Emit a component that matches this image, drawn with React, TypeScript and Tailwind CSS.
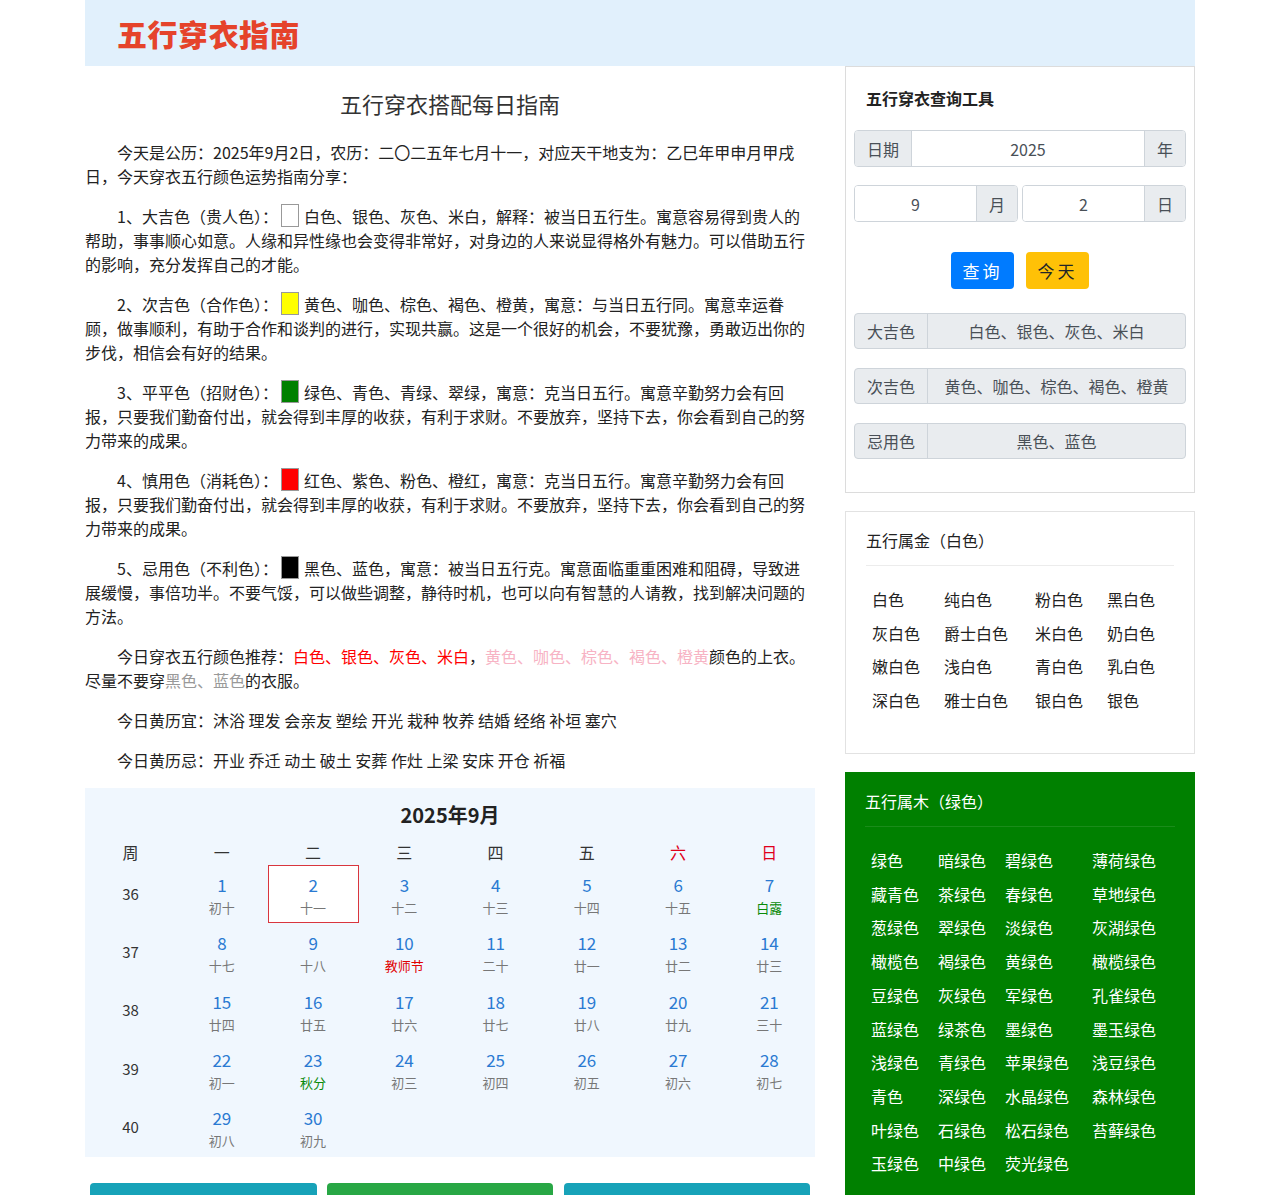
const weeks: { no: number; days: { d: number; l: string; t?: 'fest' | 'term' }[] }[] = [
  {
    no: 36,
    days: [
      { d: 1, l: '初十' },
      { d: 2, l: '十一' },
      { d: 3, l: '十二' },
      { d: 4, l: '十三' },
      { d: 5, l: '十四' },
      { d: 6, l: '十五' },
      { d: 7, l: '白露', t: 'term' },
    ],
  },
  {
    no: 37,
    days: [
      { d: 8, l: '十七' },
      { d: 9, l: '十八' },
      { d: 10, l: '教师节', t: 'fest' },
      { d: 11, l: '二十' },
      { d: 12, l: '廿一' },
      { d: 13, l: '廿二' },
      { d: 14, l: '廿三' },
    ],
  },
  {
    no: 38,
    days: [
      { d: 15, l: '廿四' },
      { d: 16, l: '廿五' },
      { d: 17, l: '廿六' },
      { d: 18, l: '廿七' },
      { d: 19, l: '廿八' },
      { d: 20, l: '廿九' },
      { d: 21, l: '三十' },
    ],
  },
  {
    no: 39,
    days: [
      { d: 22, l: '初一' },
      { d: 23, l: '秋分', t: 'term' },
      { d: 24, l: '初三' },
      { d: 25, l: '初四' },
      { d: 26, l: '初五' },
      { d: 27, l: '初六' },
      { d: 28, l: '初七' },
    ],
  },
  {
    no: 40,
    days: [
      { d: 29, l: '初八' },
      { d: 30, l: '初九' },
    ],
  },
]

const whiteColors = [
  '白色', '纯白色', '粉白色', '黑白色',
  '灰白色', '爵士白色', '米白色', '奶白色',
  '嫩白色', '浅白色', '青白色', '乳白色',
  '深白色', '雅士白色', '银白色', '银色',
]

const greenColors = [
  '绿色', '暗绿色', '碧绿色', '薄荷绿色',
  '藏青色', '茶绿色', '春绿色', '草地绿色',
  '葱绿色', '翠绿色', '淡绿色', '灰湖绿色',
  '橄榄色', '褐绿色', '黄绿色', '橄榄绿色',
  '豆绿色', '灰绿色', '军绿色', '孔雀绿色',
  '蓝绿色', '绿茶色', '墨绿色', '墨玉绿色',
  '浅绿色', '青绿色', '苹果绿色', '浅豆绿色',
  '青色', '深绿色', '水晶绿色', '森林绿色',
  '叶绿色', '石绿色', '松石绿色', '苔藓绿色',
  '玉绿色', '中绿色', '荧光绿色',
]

function Swatch({ color }: { color: string }) {
  return (
    <span
      className="ml-[3px] mr-[5px] inline-block h-[23px] w-[18px] border border-[#999] align-top"
      style={{ backgroundColor: color }}
    />
  )
}

function P({ children }: { children: React.ReactNode }) {
  return <p className="mb-[16px] indent-[32px] text-[16px] leading-[24px] text-[#222]">{children}</p>
}

function Calendar() {
  const heads = ['周', '一', '二', '三', '四', '五', '六', '日']
  return (
    <div className="bg-[#f0f7fe] pb-[1px] pt-[12px]">
      <h3 className="mb-[4px] text-center text-[20px] font-bold leading-[30px] text-[#222]">2025年9月</h3>
      <div className="grid h-[31px] grid-cols-8 pt-[6px] text-center text-[16px] leading-[24px]">
        {heads.map((h, i) => (
          <div key={h} className={i >= 6 ? 'text-[#e0001b]' : 'text-[#333]'}>
            {h}
          </div>
        ))}
      </div>
      {weeks.map((w) => (
        <div key={w.no} className="grid h-[58.25px] grid-cols-8 text-center">
          <div className="flex items-center justify-center text-[15px] text-[#333]">{w.no}</div>
          {w.days.map((day) => (
            <div
              key={day.d}
              className={
                day.d === 2
                  ? 'border border-[#d9363e] bg-white pt-[7px]'
                  : 'border border-transparent pt-[7px]'
              }
            >
              <div className="text-[17px] leading-[24px] text-[#2a7ad2]">{day.d}</div>
              <div
                className={
                  'text-[13px] leading-[22px] ' +
                  (day.t === 'fest' ? 'text-[#e00000]' : day.t === 'term' ? 'text-[#0a8a0a]' : 'text-[#777]')
                }
              >
                {day.l}
              </div>
            </div>
          ))}
        </div>
      ))}
    </div>
  )
}

function InputGroup({ label, value, unit, labelW }: { label?: string; value: string; unit: string; labelW?: string }) {
  return (
    <div className="flex h-[37px] flex-1 overflow-hidden rounded-[4px] border border-[#ced4da] text-[16px] text-[#495057]">
      {label && (
        <span className={'flex items-center justify-center border-r border-[#ced4da] bg-[#e9ecef] ' + (labelW ?? '')}>
          {label}
        </span>
      )}
      <span className="flex flex-1 items-center justify-center bg-white">{value}</span>
      <span className="flex w-[41px] items-center justify-center border-l border-[#ced4da] bg-[#e9ecef]">{unit}</span>
    </div>
  )
}

function ResultRow({ label, value }: { label: string; value: string }) {
  return (
    <div className="flex h-[36px] overflow-hidden rounded-[4px] border border-[#ced4da] bg-[#e9ecef] text-[16px] text-[#495057]">
      <span className="flex w-[73px] items-center justify-center border-r border-[#ced4da]">{label}</span>
      <span className="flex flex-1 items-center justify-center">{value}</span>
    </div>
  )
}

export default function App() {
  return (
    <div className="min-h-[1195px] w-full bg-white font-['Noto_Sans_CJK_SC',sans-serif]">
      <div className="mx-auto w-[1110px]">
        <header className="flex h-[66px] items-center bg-[#e1f0fc] pl-[32px]">
          <h1 className="text-[30px] font-black leading-none tracking-[0.5px] text-[#e5432b]">五行穿衣指南</h1>
        </header>

        <div className="flex gap-[30px]">
          <main className="w-[730px]">
            <h2 className="mb-[20px] mt-[21px] text-center text-[22px] leading-[33px] text-[#333]">五行穿衣搭配每日指南</h2>
            <P>今天是公历：2025年9月2日，农历：二〇二五年七月十一，对应天干地支为：乙巳年甲申月甲戌日，今天穿衣五行颜色运势指南分享：</P>
            <P>
              1、大吉色（贵人色）：
              <Swatch color="#ffffff" />
              白色、银色、灰色、米白，解释：被当日五行生。寓意容易得到贵人的帮助，事事顺心如意。人缘和异性缘也会变得非常好，对身边的人来说显得格外有魅力。可以借助五行的影响，充分发挥自己的才能。
            </P>
            <P>
              2、次吉色（合作色）：
              <Swatch color="#ffff00" />
              黄色、咖色、棕色、褐色、橙黄，寓意：与当日五行同。寓意幸运眷顾，做事顺利，有助于合作和谈判的进行，实现共赢。这是一个很好的机会，不要犹豫，勇敢迈出你的步伐，相信会有好的结果。
            </P>
            <P>
              3、平平色（招财色）：
              <Swatch color="#008000" />
              绿色、青色、青绿、翠绿，寓意：克当日五行。寓意辛勤努力会有回报，只要我们勤奋付出，就会得到丰厚的收获，有利于求财。不要放弃，坚持下去，你会看到自己的努力带来的成果。
            </P>
            <P>
              4、慎用色（消耗色）：
              <Swatch color="#ff0000" />
              红色、紫色、粉色、橙红，寓意：克当日五行。寓意辛勤努力会有回报，只要我们勤奋付出，就会得到丰厚的收获，有利于求财。不要放弃，坚持下去，你会看到自己的努力带来的成果。
            </P>
            <P>
              5、忌用色（不利色）：
              <Swatch color="#000000" />
              黑色、蓝色，寓意：被当日五行克。寓意面临重重困难和阻碍，导致进展缓慢，事倍功半。不要气馁，可以做些调整，静待时机，也可以向有智慧的人请教，找到解决问题的方法。
            </P>
            <P>
              今日穿衣五行颜色推荐：<span className="text-[#ff0000]">白色、银色、灰色、米白</span>，
              <span className="text-[#f7b3c4]">黄色、咖色、棕色、褐色、橙黄</span>颜色的上衣。尽量不要穿
              <span className="text-[#999]">黑色、蓝色</span>的衣服。
            </P>
            <P>今日黄历宜：沐浴 理发 会亲友 塑绘 开光 栽种 牧养 结婚 经络 补垣 塞穴</P>
            <P>今日黄历忌：开业 乔迁 动土 破土 安葬 作灶 上梁 安床 开仓 祈福</P>

            <Calendar />

            <div className="mt-[26px] flex gap-[10px] pl-[5px] text-[15px] text-white">
              <button className="flex h-[38px] w-[227px] items-center justify-center rounded-[4px] bg-[#17a2b8]">2025年8月</button>
              <button className="flex h-[38px] w-[226px] items-center justify-center rounded-[4px] bg-[#28a745]">2025年9月</button>
              <button className="ml-[1px] flex h-[38px] w-[246px] items-center justify-center rounded-[4px] bg-[#17a2b8]">2025年10月</button>
            </div>
          </main>

          <aside className="flex w-[350px] flex-col gap-[18px]">
            <section className="border border-[#dcdcdc] px-[8px] pb-[33px] pt-[19px]">
              <h2 className="pl-[12px] text-[16px] font-bold leading-[24px] text-[#222]">五行穿衣查询工具</h2>
              <div className="mt-[20px] flex">
                <InputGroup label="日期" labelW="w-[57px]" value="2025" unit="年" />
              </div>
              <div className="mt-[18px] flex gap-[4px]">
                <InputGroup value="9" unit="月" />
                <InputGroup value="2" unit="日" />
              </div>
              <div className="mt-[30px] flex justify-center gap-[12px] text-[17px]">
                <button className="h-[37px] w-[63px] rounded-[4px] bg-[#007bff] tracking-[3px] text-white">查询</button>
                <button className="h-[37px] w-[63px] rounded-[4px] bg-[#ffc107] tracking-[3px] text-[#212529]">今天</button>
              </div>
              <div className="mt-[24px] flex flex-col gap-[19px]">
                <ResultRow label="大吉色" value="白色、银色、灰色、米白" />
                <ResultRow label="次吉色" value="黄色、咖色、棕色、褐色、橙黄" />
                <ResultRow label="忌用色" value="黑色、蓝色" />
              </div>
            </section>

            <section className="border border-[#e2e2e2] px-[20px] pb-[36px] pt-[16px] text-[#222]">
              <h2 className="text-[16px] leading-[24px]">五行属金（白色）</h2>
              <div className="mt-[13px] border-t border-[#ececec]" />
              <div className="mt-[17px] grid grid-cols-[72px_91px_72px_1fr] text-[16px]">
                {whiteColors.map((c) => (
                  <div key={c} className="pl-[6px] leading-[33.5px]">
                    {c}
                  </div>
                ))}
              </div>
            </section>

            <section className="bg-[#008000] px-[20px] pb-[36px] pt-[17px] text-white">
              <h2 className="text-[16px] leading-[24px]">五行属木（绿色）</h2>
              <div className="mt-[13px] border-t border-[#1a8c1a]" />
              <div className="mt-[17px] grid grid-cols-[67px_67px_87px_1fr] text-[16px]">
                {greenColors.map((c) => (
                  <div key={c} className="pl-[6px] leading-[33.7px]">
                    {c}
                  </div>
                ))}
              </div>
            </section>
          </aside>
        </div>
      </div>
    </div>
  )
}
